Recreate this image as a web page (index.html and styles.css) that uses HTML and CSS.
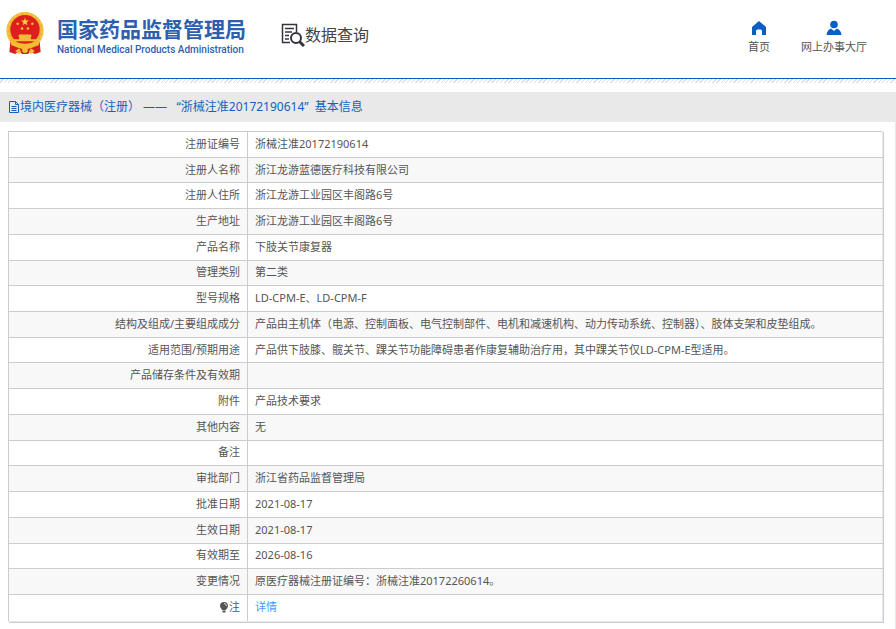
FILE: index.html
```html
<!DOCTYPE html>
<html lang="zh-CN">
<head>
<meta charset="utf-8">
<meta name="viewport" content="width=device-width, initial-scale=1">
<title>国家药品监督管理局 数据查询</title>
<link rel="stylesheet" href="styles.css">
</head>
<body>
<header class="site-header">
  <div class="brand">
    <svg class="emblem" viewBox="0 0 40 44" aria-hidden="true">
      <path fill="#d81e1c" d="M5 30 L4 41 L10 43 L14 40 L17 43 H23 L26 40 L30 43 L36 41 L35 30z"/>
      <circle cx="20" cy="19" r="19" fill="#efb32f"/>
      <circle cx="20" cy="19" r="17.500" fill="none" stroke="#f6cb48" stroke-width="1.500" stroke-dasharray="3 2"/>
      <circle cx="20" cy="18" r="15" fill="#df1f1d"/>
      <path fill="#f6cf3e" d="M20 6l1 2.800h3l-2.400 1.900.9 2.900-2.500-1.700-2.500 1.700.9-2.900-2.400-1.900h3z"/>
      <g fill="#f2bd36">
        <circle cx="12.500" cy="12" r="1.300"/><circle cx="27.500" cy="12" r="1.300"/>
        <circle cx="17" cy="17" r="1.300"/><circle cx="23" cy="17" r="1.300"/>
        <path d="M14 23h12l1 2h-1v3h6v2H8v-2h6v-3h-1z"/>
      </g>
      <path fill="#f3bd32" d="M5 30 Q20 35 35 30 L34 34 Q27 36 24 37 L20 34 L16 37 Q13 36 6 34z"/>
      <circle cx="20" cy="39" r="3" fill="#f3bd32"/>
      <path fill="#f3bd32" d="M10 40l4-3 2 4-2 2zM30 40l-4-3-2 4 2 2z"/>
    </svg>
    <div class="brand-text">
      <span class="brand-cn">国家药品监督管理局</span>
      <span class="brand-en">National Medical Products Administration</span>
    </div>
  </div>
  <div class="section-name">
    <svg class="search-doc" viewBox="0 0 24 24" fill="none" stroke="#34343f" aria-hidden="true">
      <path stroke-width="1.500" d="M9 19.500H1.500V1.500h14V9M4 5.500h9M4 9h7M4 12.500h4M4 16h4"/>
      <circle cx="15" cy="15" r="5" stroke-width="2"/>
      <path stroke-width="3" d="M18.500 18.500L23 23"/>
    </svg>
    <span>数据查询</span>
  </div>
  <nav class="top-nav">
    <a href="#">
      <svg viewBox="0 0 16 16" aria-hidden="true"><path fill="#0a5fc0" d="M8 1L1 7V15h4v-4q0-1.500 1.500-1.500h3Q11 9.500 11 11v4h4V7z"/></svg>
      <span>首页</span>
    </a>
    <a href="#">
      <svg viewBox="0 0 16 16" aria-hidden="true"><circle cx="8" cy="4.500" r="3.800" fill="#0a5fc0"/><path fill="#0a5fc0" d="M.5 15Q1 10 5 8.500L8 11l3-2.500q4 1.500 4.500 6.500z"/></svg>
      <span>网上办事大厅</span>
    </a>
  </nav>
</header>
<div class="hatch"></div>
<main class="page">
  <h1 class="title">
    <svg viewBox="0 0 12 12" fill="none" stroke="#1063bd" aria-hidden="true"><path d="M1.500.5h6l3 3v8h-9zM7.500.5v3h3M3.500 5.500h5M3.500 7.500h5M3.500 9.500h5"/></svg>
    <span>境内医疗器械（注册） ——&nbsp;&nbsp; “浙械注准20172190614”&nbsp; 基本信息</span>
  </h1>
  <table class="info">
    <tbody>
      <tr><th scope="row">注册证编号</th><td>浙械注准20172190614</td></tr>
      <tr><th scope="row">注册人名称</th><td>浙江龙游蓝德医疗科技有限公司</td></tr>
      <tr><th scope="row">注册人住所</th><td>浙江龙游工业园区丰阁路6号</td></tr>
      <tr><th scope="row">生产地址</th><td>浙江龙游工业园区丰阁路6号</td></tr>
      <tr><th scope="row">产品名称</th><td>下肢关节康复器</td></tr>
      <tr><th scope="row">管理类别</th><td>第二类</td></tr>
      <tr><th scope="row">型号规格</th><td>LD-CPM-E、LD-CPM-F</td></tr>
      <tr><th scope="row">结构及组成/主要组成成分</th><td>产品由主机体（电源、控制面板、电气控制部件、电机和减速机构、动力传动系统、控制器）、肢体支架和皮垫组成。</td></tr>
      <tr><th scope="row">适用范围/预期用途</th><td>产品供下肢膝、髋关节、踝关节功能障碍患者作康复辅助治疗用，其中踝关节仅LD-CPM-E型适用。</td></tr>
      <tr><th scope="row">产品储存条件及有效期</th><td></td></tr>
      <tr><th scope="row">附件</th><td>产品技术要求</td></tr>
      <tr><th scope="row">其他内容</th><td>无</td></tr>
      <tr><th scope="row">备注</th><td></td></tr>
      <tr><th scope="row">审批部门</th><td>浙江省药品监督管理局</td></tr>
      <tr><th scope="row">批准日期</th><td>2021-08-17</td></tr>
      <tr><th scope="row">生效日期</th><td>2021-08-17</td></tr>
      <tr><th scope="row">有效期至</th><td>2026-08-16</td></tr>
      <tr><th scope="row">变更情况</th><td>原医疗器械注册证编号：浙械注准20172260614。</td></tr>
      <tr><th scope="row"><svg class="bulb" viewBox="0 0 10 12" aria-hidden="true"><path fill="#555" d="M5 1a4 4 0 0 0-4 4c0 2 2 3 2.500 4.500h3C7 8 9 7 9 5a4 4 0 0 0-4-4zM3.500 10h3v1.500h-3z"/><path fill="none" stroke="#ddd" d="M5 2.500Q7.500 2.500 7.500 5"/></svg>注</th><td><a href="#">详情</a></td></tr>
    </tbody>
  </table>
</main>
</body>
</html>
```
FILE: styles.css
```css
* {
  box-sizing: border-box;
}

body {
  margin: 0;
  background: #fff;
  color: #555;
  font-family: "Noto Sans", "Noto Sans CJK SC", sans-serif;
  font-size: 11px;
  line-height: 16px;
}

a {
  color: #409eff;
  text-decoration: none;
}

.site-header {
  display: flex;
  align-items: flex-start;
  height: 79px;
  padding: 12px 29px 0 5px;
  border-bottom: 1px solid #0a5fc0;
}

.brand {
  display: flex;
  gap: 12px;
}

.emblem {
  width: 40px;
  height: 43px;
}

.brand-text {
  display: flex;
  flex-direction: column;
  padding-top: 4px;
  color: #2e5fae;
  white-space: nowrap;
}

.brand-cn {
  font-size: 21px;
  font-weight: 700;
  line-height: 26px;
}

.brand-en {
  font-family: Roboto, sans-serif;
  font-size: 10px;
  font-weight: 500;
  line-height: 16px;
}

.section-name {
  display: flex;
  align-items: center;
  margin: 10px 0 0 35px;
  color: #444;
  font-size: 16px;
  line-height: 26px;
  white-space: nowrap;
}

.search-doc {
  width: 24px;
  height: 24px;
}

.top-nav {
  display: flex;
  gap: 31px;
  margin-left: auto;
  padding-top: 8px;
}

.top-nav a {
  display: flex;
  flex-direction: column;
  align-items: center;
  gap: 3px;
  color: #555;
}

.top-nav svg {
  width: 16px;
  height: 16px;
}

.hatch {
  height: 4px;
  background: repeating-linear-gradient(135deg, #fff 0 2px, #ddd 2px 3px);
}

.page {
  margin-top: 9px;
  border-right: 1px solid #e9e9e9;
  padding-bottom: 7px;
}

.title {
  display: flex;
  align-items: center;
  height: 30px;
  margin: 0 0 9px;
  padding-left: 8px;
  background: #e9e9e9;
  color: #1063bd;
  font-size: 12px;
  font-weight: 400;
}

.title svg {
  width: 12px;
  height: 12px;
}

.info {
  width: calc(100% - 20px);
  height: 491px;
  margin-left: 8px;
  border-collapse: collapse;
  box-shadow: 1px 1px 0 #ccc;
}

.info tr:nth-child(even) {
  background: #f8f8f8;
}

.info th,
.info td {
  padding: 3px 7px 4px;
  border: 1px solid #ccc;
  font-weight: 400;
  text-align: left;
}

.info th {
  width: 239px;
  text-align: right;
}

.info td {
  border-right-color: #e8e8f2;
}

.info tr:last-child > * {
  padding-bottom: 5px;
  border-bottom-color: #e8e8f2;
}

.bulb {
  width: 10px;
  height: 12px;
  vertical-align: -2px;
}
```
